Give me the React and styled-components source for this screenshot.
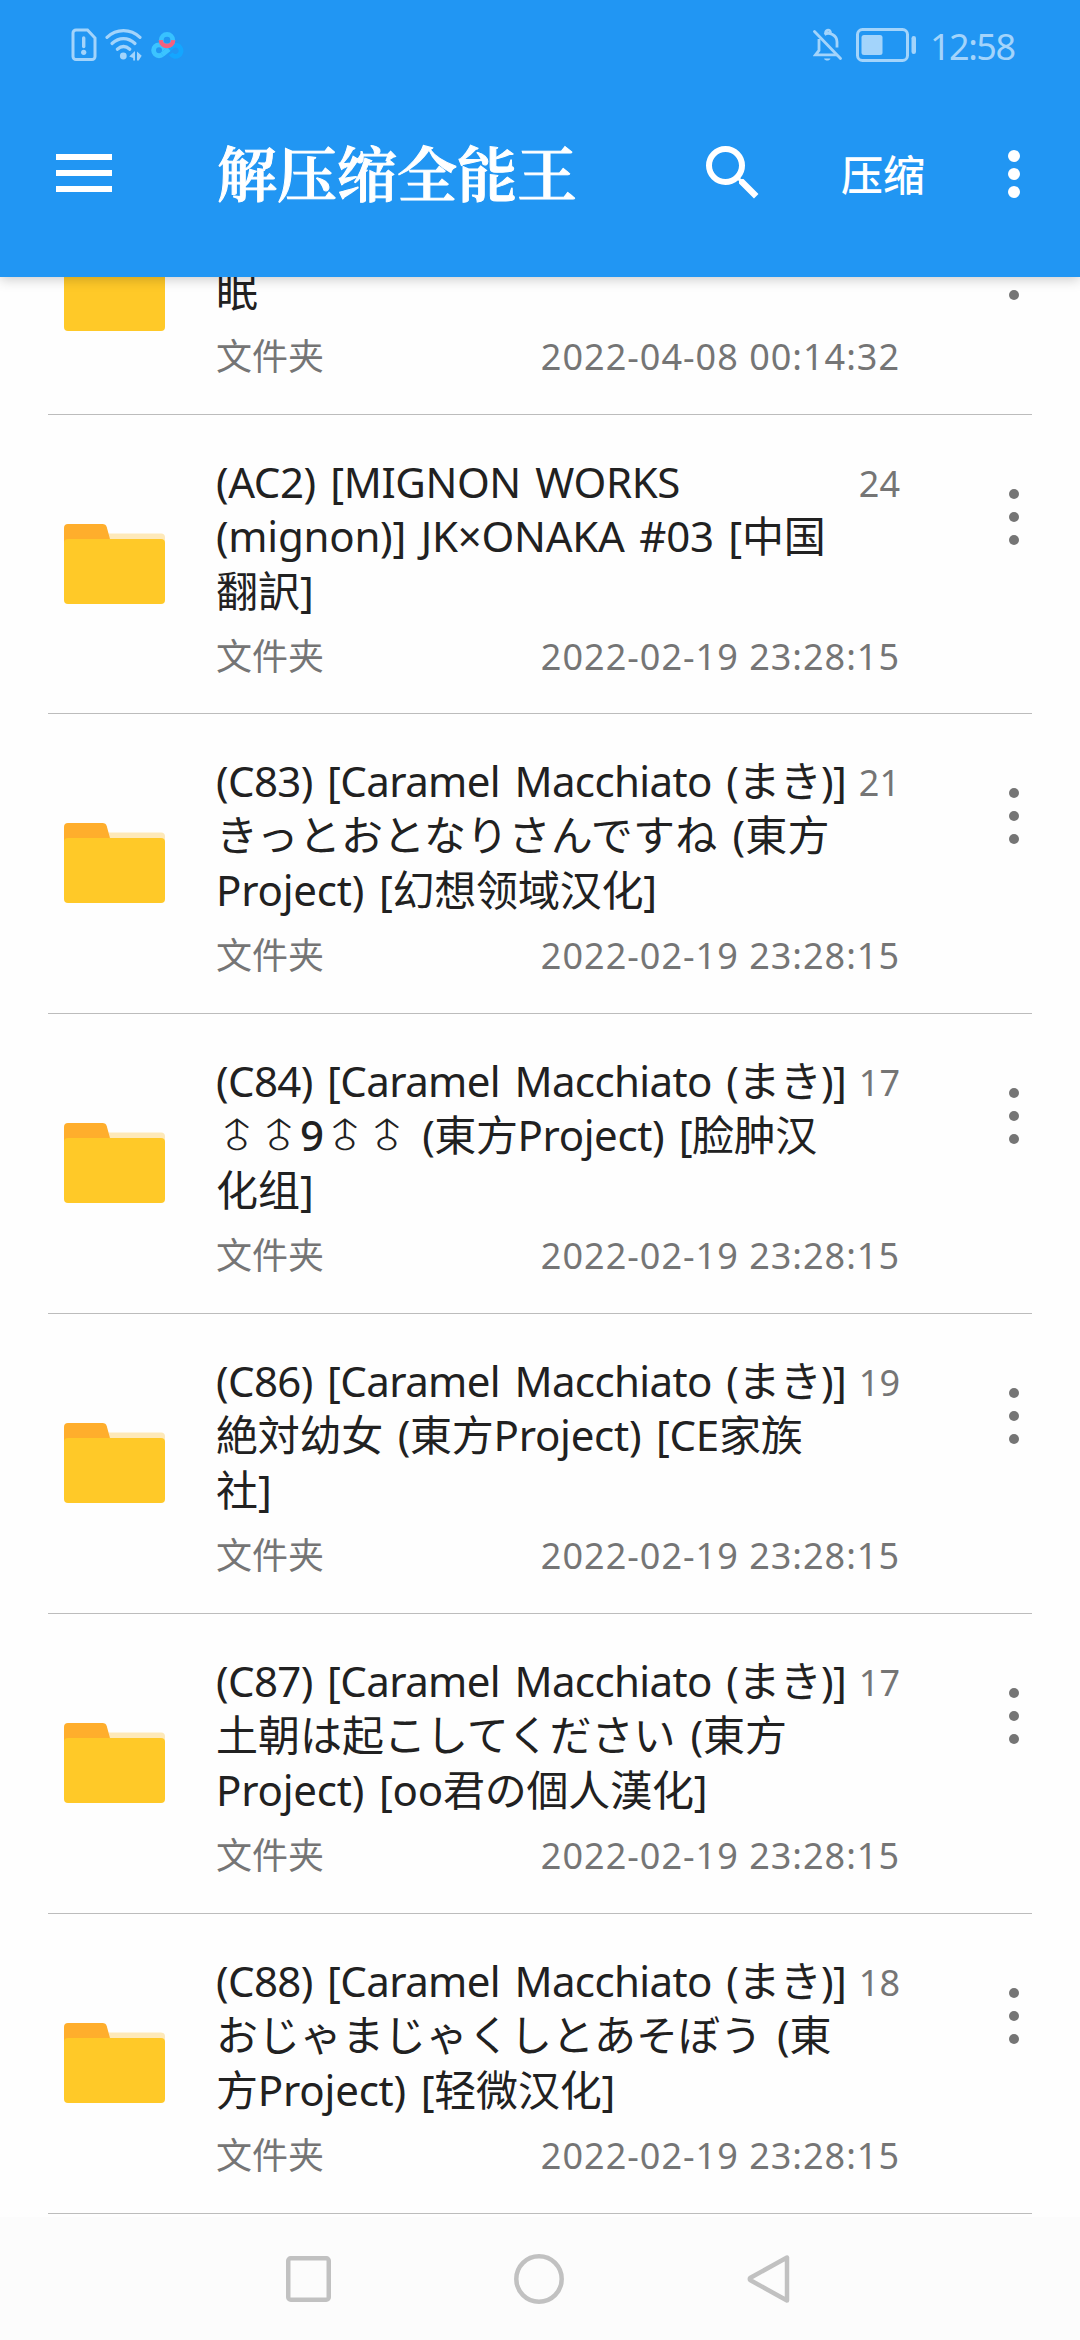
import styled, { createGlobalStyle, css } from 'styled-components';

const DATE = '2022-02-19 23:28:15';
const ARTIST = '[Caramel Macchiato (まき)]';

const FOLDERS = [
  { id: 1, lines: [{ text: '\u00a0' }, { text: '眠' }], date: '2022-04-08 00:14:32' },
  {
    id: 2,
    tight: true,
    count: 24,
    date: DATE,
    lines: [
      { text: '(AC2) [MIGNON WORKS', track: -0.4 },
      { text: '(mignon)] JK×ONAKA #03 [中国', track: -0.25 },
      { text: '翻訳]' },
    ],
  },
  {
    id: 3,
    count: 21,
    date: DATE,
    lines: [
      { text: `(C83) ${ARTIST}`, track: -0.6 },
      { text: 'きっとおとなりさんですね (東方', track: 0.2 },
      { text: 'Project) [幻想领域汉化]', track: -0.2 },
    ],
  },
  {
    id: 4,
    count: 17,
    date: DATE,
    lines: [
      { text: `(C84) ${ARTIST}`, track: -0.6 },
      { text: '♂♂9♂♂ (東方Project) [脸肿汉', track: -0.4 },
      { text: '化组]' },
    ],
  },
  {
    id: 5,
    count: 19,
    date: DATE,
    lines: [
      { text: `(C86) ${ARTIST}`, track: -0.6 },
      { text: '絶対幼女 (東方Project) [CE家族', track: -0.25 },
      { text: '社]' },
    ],
  },
  {
    id: 6,
    count: 17,
    date: DATE,
    lines: [
      { text: `(C87) ${ARTIST}`, track: -0.6 },
      { text: '土朝は起こしてください (東方' },
      { text: 'Project) [oo君の個人漢化]', track: -0.2 },
    ],
  },
  {
    id: 7,
    count: 18,
    date: DATE,
    lines: [
      { text: `(C88) ${ARTIST}`, track: -0.6 },
      { text: 'おじゃまじゃくしとあそぼう (東' },
      { text: '方Project) [轻微汉化]', track: -0.2 },
    ],
  },
];

// the male sign points straight up in the list font
const renderText = text =>
  text.split(/(♂|9(?=♂))/).map((part, idx) => {
    if (part === '♂') return <Upright key={idx}>{part}</Upright>;
    if (part === '9') return <Heavy key={idx}>{part}</Heavy>;
    return part;
  });

function SimIcon() {
  return (
    <svg width="26" height="34" viewBox="0 0 26 34" fill="none" stroke="currentColor">
      <path d="M5 2h11.5L24 10v18.5a3 3 0 0 1-3 3H5a3 3 0 0 1-3-3V5a3 3 0 0 1 3-3z" strokeWidth="3" />
      <path d="M12.7 10v8.5" strokeWidth="3.4" strokeLinecap="round" />
      <circle cx="12.7" cy="24.3" r="2.6" fill="currentColor" stroke="none" />
    </svg>
  );
}

function WifiIcon() {
  return (
    <svg width="38" height="34" viewBox="0 0 38 34" fill="none" stroke="currentColor">
      <g strokeWidth="3.2" strokeLinecap="round">
        <path d="M2 9.3C11.5.3 25.5.3 35 9.3" />
        <path d="M7 15.500c7-6.600 16-6.600 23 0" />
        <path d="M12.300 21.300c4-3.600 8.500-3.600 12.500 0" />
      </g>
      <circle cx="18.300" cy="28" r="3.400" fill="currentColor" stroke="none" />
      <path d="M30 23v9.500h-1.800V30l-4-1.500zM32 23.500l4.700 4.300-3 4.700H32z" fill="currentColor" stroke="none" />
    </svg>
  );
}

function CloudIcon() {
  return (
    <svg width="33" height="27" viewBox="0 0 34 28" fill="none" strokeWidth="5">
      <circle cx="8.200" cy="19" r="5.600" stroke="#3cc4ff" />
      <path d="M11.500 23.500l11-9a5.700 5.700 0 1 1-2 8" stroke="#14a6ff" />
      <path d="M11.500 23.500l7-5.700" stroke="#3cc4ff" />
      <circle cx="16.500" cy="8.500" r="6" stroke="#38c2ff" />
      <path d="M10 8.500c.5 8 12.500 8 13 0" stroke="#f4607f" strokeWidth="4.500" />
    </svg>
  );
}

function BellOffIcon() {
  return (
    <svg width="30" height="34" viewBox="0 0 30 34" fill="none" stroke="currentColor" strokeWidth="2.800">
      <path d="M6 11v11.500l-3.500 4.300H24M11.500 6.500C16 3.500 24 7 24 14v5.500M12.500 6c0-5 5-5 5-1" />
      <path d="M1.500 3.500l26 27" strokeLinecap="round" />
      <path d="M11 30.500h6.500c-1 2.800-5.500 2.800-6.500 0z" fill="currentColor" stroke="none" />
    </svg>
  );
}

function BatteryIcon() {
  return (
    <svg width="61" height="34" viewBox="0 0 61 34" fill="none">
      <rect x="1.500" y="1.500" width="50" height="31" rx="5" stroke="currentColor" strokeWidth="3" />
      <rect x="5.500" y="7" width="21" height="20" rx="2.500" fill="currentColor" />
      <rect x="55.500" y="8" width="4.500" height="18" rx="2.200" fill="currentColor" />
    </svg>
  );
}

function FolderIcon() {
  return (
    <svg width="101" height="80" viewBox="0 0 101 80">
      <path d="M40 9.500h57a4 4 0 0 1 4 4V30H40z" fill="#fee9b9" />
      <path d="M0 4a4 4 0 0 1 4-4h34.500a4.500 4.500 0 0 1 4.300 3.200L46.500 17 0 30z" fill="#ffae2c" />
      <rect y="15" width="101" height="65" rx="4" fill="#ffc928" />
    </svg>
  );
}

function FolderRow({ folder }) {
  return (
    <Row $tight={folder.tight}>
      <FolderIcon />
      <Info>
        <NameArea>
          <Name>
            {folder.lines.map((line, idx) => (
              <NameLine key={idx} $track={line.track}>
                {renderText(line.text)}
              </NameLine>
            ))}
          </Name>
          <Count>{folder.count}</Count>
        </NameArea>
        <Meta>
          <span>文件夹</span>
          <DateText>{folder.date}</DateText>
        </Meta>
      </Info>
      <RowMenu aria-label="更多">
        <Dot />
        <Dot />
        <Dot />
      </RowMenu>
    </Row>
  );
}

function App() {
  return (
    <Screen>
      <GlobalStyle />
      <Header>
        <StatusBar>
          <SimIcon />
          <WifiIcon />
          <CloudIcon />
          <StatusRight>
            <BellOffIcon />
            <BatteryIcon />
            <Clock>12:58</Clock>
          </StatusRight>
        </StatusBar>
        <Toolbar>
          <MenuButton aria-label="菜单">
            <Bar />
            <Bar />
            <Bar />
          </MenuButton>
          <Title>解压缩全能王</Title>
          <SearchButton aria-label="搜索">
            <svg width="72" height="72" viewBox="0 0 24 24" fill="#fff">
              <path d="M15.500 14h-.79l-.28-.27A6.471 6.471 0 0 0 16 9.500 6.500 6.500 0 1 0 9.500 16c1.610 0 3.090-.59 4.230-1.570l.27.28v.79l5 4.990L20.490 19l-4.990-5zm-6 0C7.010 14 5 11.990 5 9.500S7.010 5 9.500 5 14 7.010 14 9.500 11.990 14 9.500 14z" />
            </svg>
          </SearchButton>
          <CompressButton>压缩</CompressButton>
          <Overflow aria-label="更多">
            <Dot $light />
            <Dot $light />
            <Dot $light />
          </Overflow>
        </Toolbar>
      </Header>
      <List>
        {FOLDERS.map(el => (
          <FolderRow key={el.id} folder={el} />
        ))}
      </List>
      <NavBar>
        <svg width="45" height="46" viewBox="0 0 45 46">
          <rect x="2.250" y="2.250" width="40.500" height="41.500" rx="2.500" />
        </svg>
        <svg width="50" height="50" viewBox="0 0 50 50">
          <circle cx="25" cy="25" r="22.700" />
        </svg>
        <svg width="43" height="50" viewBox="0 0 43 50">
          <path d="M40 3.500v43L3.500 26.300a1.500 1.500 0 0 1 0-2.600z" />
        </svg>
      </NavBar>
    </Screen>
  );
}

export default App;

const GlobalStyle = createGlobalStyle`
  * {
    box-sizing: border-box;
  }
  body {
    margin: 0;
    font-family: 'Noto Sans', 'Noto Sans CJK SC', sans-serif;
  }
  button {
    border: none;
    padding: 0;
    background: none;
    font-family: inherit;
  }
  svg {
    display: block;
    flex-shrink: 0;
  }
`;

const Screen = styled.div`
  display: flex;
  flex-direction: column;
  width: 1080px;
  height: 2340px;
  overflow: hidden;
  background-color: #fefefe;
`;

const Header = styled.header`
  position: relative;
  z-index: 1;
  flex-shrink: 0;
  height: 277px;
  background-color: #2196f3;
  box-shadow: 0 2px 12px rgba(0, 0, 0, 0.22);
`;

const StatusBar = styled.div`
  display: flex;
  align-items: center;
  gap: 8px;
  height: 69px;
  padding: 21px 65px 0 71px;
  color: #a3d4fb;
`;

const StatusRight = styled.div`
  display: flex;
  align-items: center;
  gap: 13px;
  margin-left: auto;
`;

const Clock = styled.span`
  width: 85px;
  font-size: 36px;
  line-height: 48px;
  letter-spacing: -1.5px;
  padding-top: 4px;
`;

const Toolbar = styled.div`
  display: flex;
  align-items: center;
  height: 208px;
  padding-left: 56px;
`;

const MenuButton = styled.button`
  display: flex;
  flex-direction: column;
  gap: 10px;
  width: 56px;
`;

const Bar = styled.span`
  height: 6px;
  background-color: white;
`;

const Title = styled.h1`
  margin: -5px 0 0 105px;
  width: 480px;
  font-family: 'Noto Serif CJK SC', 'Noto Serif SC', serif;
  font-size: 60px;
  font-weight: 600;
  line-height: 80px;
  color: white;
  -webkit-text-stroke: 1px white;
`;

const SearchButton = styled.button`
  width: 72px;
`;

const CompressButton = styled.button`
  margin: 4px 0 0 72px;
  width: 84px;
  font-size: 42px;
  font-weight: 500;
  line-height: 60px;
  white-space: nowrap;
  color: white;
`;

const Overflow = styled.button`
  display: flex;
  flex-direction: column;
  gap: 6px;
  margin: 2px 0 0 83px;
`;

const Dot = styled.span`
  width: 10px;
  height: 10px;
  border-radius: 50%;
  background-color: #757575;
  ${({ $light }) =>
    $light &&
    css`
      width: 12px;
      height: 12px;
      background-color: white;
    `}
`;

const List = styled.main`
  display: flex;
  flex-direction: column;
  justify-content: flex-end;
  height: 1940px;
  padding: 0 48px 3px;
  overflow: hidden;
`;

const Row = styled.div`
  display: flex;
  align-items: center;
  flex-shrink: 0;
  padding-left: 16px;
  padding-bottom: ${({ $tight }) => ($tight ? 0 : 1)}px;
  border-bottom: 1px solid #bcbcbc;
`;

const Info = styled.div`
  width: 684px;
  margin-left: 51px;
  padding: 39.5px 0 31px;
`;

const NameArea = styled.div`
  display: flex;
  justify-content: space-between;
`;

const Name = styled.div`
  width: 632px;
  font-size: 42px;
  color: #212121;
`;

const NameLine = styled.div`
  height: 54.5px;
  line-height: 54.5px;
  white-space: pre;
  word-spacing: 4px;
  letter-spacing: ${({ $track = 0 }) => $track}px;
`;

const Upright = styled.span`
  display: inline-block;
  width: 42px;
  text-align: center;
  font-weight: 300;
  transform: scale(1.1, 0.8) rotate(-45deg);
`;

const Heavy = styled.span`
  font-weight: 500;
`;

const Count = styled.span`
  font-size: 36px;
  line-height: 58px;
  color: #757575;
`;

const Meta = styled.div`
  display: flex;
  justify-content: space-between;
  margin-top: 14px;
  font-size: 36px;
  line-height: 50px;
  color: #757575;
`;

const DateText = styled.span`
  letter-spacing: 1px;
`;

const RowMenu = styled.button`
  display: flex;
  flex-direction: column;
  align-self: flex-start;
  gap: 13px;
  margin: 74px 0 0 109px;
`;

const NavBar = styled.nav`
  display: flex;
  align-items: center;
  gap: 183px;
  height: 123px;
  padding-left: 286px;
  background-color: #fcfcfc;

  svg {
    fill: none;
    stroke: #c1c1c1;
    stroke-width: 4.5px;
    stroke-linejoin: round;
  }
`;
